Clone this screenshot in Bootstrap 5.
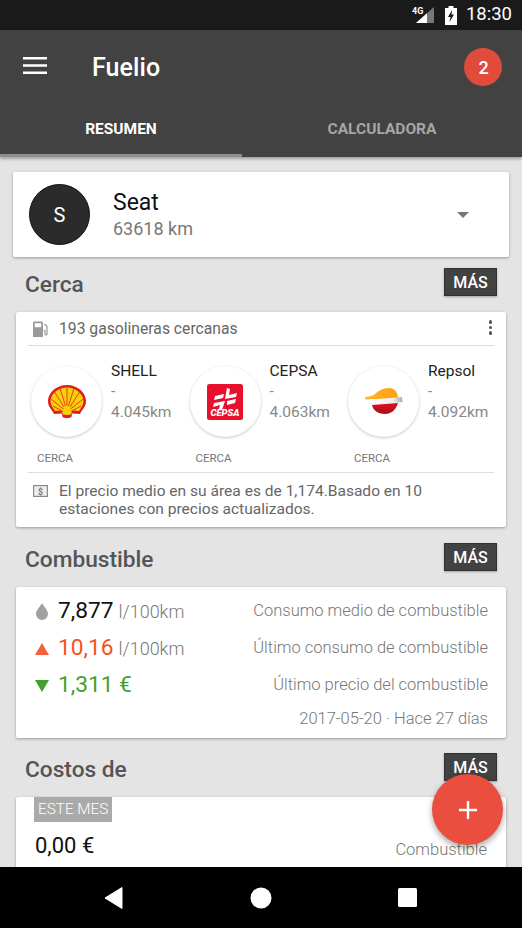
<!DOCTYPE html>
<html lang="es">
<head>
  <meta charset="UTF-8" />
  <title>Fuelio</title>
  <meta name="viewport" content="width=device-width, initial-scale=1.0" />
  <link href="https://cdn.jsdelivr.net/npm/bootstrap@5.3.2/dist/css/bootstrap.min.css" rel="stylesheet">
  <style>
    html, body { height: 928px; overflow: hidden; }
    body { font-family: Roboto, "Liberation Sans", sans-serif; background: #e4e4e4; width: 522px; }
    .screen { height: 928px; position: relative; }

    .status-bar { height: 30px; background: #1a1a1a; color: #fff; font-size: 18.5px; padding-right: 10px; }
    .app-bar { height: 127px; background: #424242; color: #fff; box-shadow: 0 2px 3px rgba(0,0,0,.3); z-index: 2; position: relative; }
    .app-top { height: 74px; padding: 0 20px 0 23px; }
    .menu-ico { margin-bottom: 3px; }
    .app-title { font-size: 25px; font-weight: 500; margin-left: 45px; padding-top: 1px; letter-spacing: .1px; }
    .alert-dot { width: 38px; height: 38px; background: #e04b3a; font-size: 18px; font-weight: 500; padding-left: 1px; }
    .tab-item { height: 53px; font-size: 15.5px; font-weight: 700; color: #a6a6a6; padding-top: 2px; padding-bottom: 3px; }
    .tab-one { width: 242px; }
    .tab-two { width: 280px; }
    .tab-item.on { color: #fff; border-bottom: 3px solid #8e8e8e; padding-bottom: 0; }

    .content { height: 710px; overflow: hidden; padding-top: 15px; }
    .sheet { background: #fff; border-radius: 2px; box-shadow: 0 1px 3px rgba(0,0,0,.32); }
    .car-sheet { margin: 0 13px; height: 85px; padding: 0 40px 0 16px; }
    .car-avatar { width: 61px; height: 61px; background: #2b2b2b; border: 1px solid #111; color: #fff; font-size: 20px; margin-right: 23px; }
    .car-name { font-size: 23px; line-height: 28px; color: #111; }
    .car-km { font-size: 18px; line-height: 24px; color: #777; }
    .caret-down { width: 0; height: 0; border-left: 6.5px solid transparent; border-right: 6.5px solid transparent; border-top: 6.5px solid #777; }

    .sect-head { height: 28px; margin-bottom: 16px; padding: 0 25px; }
    .gap-a { margin-top: 11px; }
    .gap-b { margin-top: 16px; }
    .gap-c { margin-top: 15px; }
    .sect-name { font-size: 22.7px; font-weight: 500; color: #555; padding-top: 6px; }
    .more-btn { width: 53px; height: 28px; background: #424242; color: #fff; font-size: 16px; font-weight: 500; padding: 1px 0 0; border-radius: 0; border: 1px solid #333; box-shadow: 0 1px 2px rgba(0,0,0,.3); }
    .sect-wrap { margin: 0 16px; }

    .near-sheet { height: 215px; padding: 0 12px; }
    .near-top { height: 34px; font-size: 15.7px; color: #666; border-bottom: 1px solid #ddd; padding-right: 2px; }
    .near-top svg { margin: 0 11px 0 5px; }
    .dots-v i { display: block; width: 3.5px; height: 3.5px; border-radius: 50%; background: #555; margin-bottom: 2px; }
    .stations { height: 127px; border-bottom: 1px solid #ddd; padding-left: 3px; }
    .station { width: 158.5px; flex-shrink: 0; padding-top: 20px; }
    .logo-disc { width: 71px; height: 71px; background: #fff; box-shadow: 0 1px 3px rgba(0,0,0,.22); margin-right: 9px; flex-shrink: 0; }
    .st-text { padding-top: 1px; }
    .st-name { font-size: 15.5px; line-height: 20px; color: #222; margin-top: -6px; }
    .st-line { font-size: 15.5px; line-height: 21px; color: #888; }
    .near-tag { font-size: 11.5px; color: #777; padding-left: 6px; margin-top: 13px; }
    .near-foot { font-size: 15.55px; line-height: 18px; color: #666; padding-top: 9px; }
    .near-foot svg { margin: 3px 11px 0 5px; flex-shrink: 0; }

    .fuel-sheet { height: 151px; padding: 6px 18px 0 19px; }
    .fuel-row { height: 37px; }
    .fuel-ico { width: 14px; margin-right: 9px; }
    .fuel-val { font-size: 22.7px; margin-right: 5px; color: #111; }
    .fuel-unit { font-size: 18px; font-weight: 300; color: #777; }
    .fuel-label { font-size: 16.5px; font-weight: 300; color: #777; margin-left: auto; }
    .val-up { color: #f4511e; }
    .val-down { color: #43a02c; }
    .fuel-date { font-size: 16.5px; font-weight: 300; color: #777; text-align: right; margin-top: 3px; }

    .cost-sheet { height: 120px; padding: 0 19px; }
    .month-tag { display: inline-block; background: #aaa; color: #fff; font-size: 15.3px; font-weight: 300; height: 25px; line-height: 25px; padding: 0 4px; margin-left: -1px; }
    .cost-row { margin-top: 7px; }
    .cost-val { font-size: 22px; color: #111; }
    .cost-label { font-size: 16.5px; font-weight: 300; color: #777; margin-bottom: -1px; }

    .fab-add { position: absolute; left: 432px; top: 774px; width: 71px; height: 71px; background: #e94e3f; box-shadow: 0 3px 6px rgba(0,0,0,.35); z-index: 3; }
    .nav-bar { position: absolute; left: 0; right: 0; bottom: 0; height: 61px; background: #000; z-index: 4; }
  </style>
</head>
<body>
<div class="screen d-flex flex-column">

  <div class="status-bar d-flex align-items-center justify-content-end">
    <svg width="22" height="20" viewBox="0 0 22 20" style="margin-right:11px">
      <path d="M4 18 L22 2 V18 Z" fill="#777"/>
      <path d="M4 18 L15 8.200 V18 Z" fill="#fff"/>
      <text x="0" y="9" font-size="9" font-weight="700" fill="#fff" font-family="Roboto, sans-serif">4G</text>
    </svg>
    <svg width="12" height="19" viewBox="0 0 12 19" style="margin-right:9px">
      <path d="M3.500 0h5v2H12v17H0V2h3.500z" fill="#fff"/>
      <path d="M7 4 L3 11 H5.500 L4.500 16 L9 8.500 H6.500 Z" fill="#1a1a1a"/>
    </svg>
    <span>18:30</span>
  </div>

  <div class="app-bar">
    <div class="app-top d-flex align-items-center">
      <svg class="menu-ico" width="24" height="17" viewBox="0 0 24 17"><path d="M0 1.200h24M0 8.500h24M0 15.800h24" stroke="#fff" stroke-width="2.400"/></svg>
      <span class="app-title">Fuelio</span>
      <span class="alert-dot rounded-circle d-flex align-items-center justify-content-center ms-auto">2</span>
    </div>
    <div class="d-flex">
      <div class="tab-item tab-one on d-flex align-items-center justify-content-center">RESUMEN</div>
      <div class="tab-item tab-two d-flex align-items-center justify-content-center">CALCULADORA</div>
    </div>
  </div>

  <div class="content">
    <div class="sheet car-sheet d-flex align-items-center">
      <div class="car-avatar rounded-circle d-flex align-items-center justify-content-center">S</div>
      <div>
        <div class="car-name">Seat</div>
        <div class="car-km">63618 km</div>
      </div>
      <div class="caret-down ms-auto"></div>
    </div>

    <div class="sect-head gap-a d-flex align-items-center justify-content-between">
      <span class="sect-name">Cerca</span>
      <button class="btn more-btn" type="button">MÁS</button>
    </div>
    <div class="sect-wrap">
      <div class="sheet near-sheet">
        <div class="near-top d-flex align-items-center">
          <svg width="15" height="16" viewBox="0 0 15 16">
            <path d="M0 1.500A1 1 0 0 1 1 .5h8a1 1 0 0 1 1 1V16H0z" fill="#9a9a9a"/>
            <rect x="1.800" y="2.200" width="6.400" height="4" fill="#fff"/>
            <path d="M11.500 3l2.500 2.500V13a1 1 0 0 1-2 0V9.500h-1.500" fill="none" stroke="#9a9a9a" stroke-width="1.200"/>
          </svg>
          <span>193 gasolineras cercanas</span>
          <span class="dots-v ms-auto"><i></i><i></i><i></i></span>
        </div>

        <div class="stations d-flex">
          <div class="station">
            <div class="d-flex">
              <div class="logo-disc rounded-circle d-flex align-items-center justify-content-center">
                <svg width="38" height="34" viewBox="0 0 38 34">
                  <path d="M19 0C8 0 0 8 0 16c0 5 3 8 5 11l1 2 8-.5.500 3.500c2 1.500 7 1.500 9 0l.5-3.500 8 .5 1-2c2-3 5-6 5-11C38 8 30 0 19 0z" fill="#dd1d21"/>
                  <path d="M19 2.500C10 2.500 2.500 9 2.500 16c0 4 2.500 7 4.500 10l6.500-.5 1.500 4c2 .5 6 .5 8 0l1.500-4 6.500.5c2-3 4.500-6 4.500-10C35.500 9 28 2.500 19 2.500z" fill="#fbce07"/>
                  <path d="M19 21V2.500M17.500 21L12 3.500M20.500 21L26 3.500M16 22L6.500 7M22 22L31.500 7M15.500 24L2.800 14M22.500 24L35.200 14M15 26.500L5 21M23 26.500L33 21" stroke="#e03020" stroke-width=".9" fill="none"/>
                </svg>
              </div>
              <div class="st-text">
                <div class="st-name">SHELL</div>
                <div class="st-line">-</div>
                <div class="st-line">4.045km</div>
              </div>
            </div>
            <div class="near-tag">CERCA</div>
          </div>
          <div class="station">
            <div class="d-flex">
              <div class="logo-disc rounded-circle d-flex align-items-center justify-content-center">
                <svg width="36" height="36" viewBox="0 0 36 36">
                  <rect width="36" height="36" rx="2.500" fill="#e8112d"/>
                  <path d="M20 4l3 1-1 6 8-2-1 4-11 2zM8 12l9-2-1 4-9 2zM7 19l11-2-3 9-3-1 1-4-7 2zM20 17l9-2-1 4-8 2z" fill="#fff"/>
                  <text x="18" y="32" text-anchor="middle" textLength="29" lengthAdjust="spacingAndGlyphs" font-size="8.500" font-weight="900" font-style="italic" fill="#fff" font-family="Roboto, sans-serif">CEPSA</text>
                </svg>
              </div>
              <div class="st-text">
                <div class="st-name">CEPSA</div>
                <div class="st-line">-</div>
                <div class="st-line">4.063km</div>
              </div>
            </div>
            <div class="near-tag">CERCA</div>
          </div>
          <div class="station">
            <div class="d-flex">
              <div class="logo-disc rounded-circle d-flex align-items-center justify-content-center">
                <svg width="38" height="27" viewBox="0 0 38 27">
                  <defs>
                    <linearGradient id="capFill" x1="0" y1="0" x2="1" y2="0"><stop offset="0" stop-color="#ffb52e"/><stop offset="1" stop-color="#ff9f0a"/></linearGradient>
                    <linearGradient id="bandFill" x1="0" y1="0" x2="1" y2="0"><stop offset="0" stop-color="#fff"/><stop offset=".7" stop-color="#eee"/><stop offset="1" stop-color="#aaa"/></linearGradient>
                    <linearGradient id="baseFill" x1="0" y1="0" x2="0" y2="1"><stop offset="0" stop-color="#e0101e"/><stop offset="1" stop-color="#a80f1c"/></linearGradient>
                  </defs>
                  <path d="M0 9c3 0 8-1 10-3 3-3 8-6 14-6 6 0 9 5 9 11H6c-4 1-6 1-6-2z" fill="url(#capFill)"/>
                  <path d="M6 11.500l31-2.500.5 5-31.500 3z" fill="url(#bandFill)"/>
                  <path d="M7 17l26-2c-2 7-7 11-13 11-6 0-12-3-13-9z" fill="url(#baseFill)"/>
                </svg>
              </div>
              <div class="st-text">
                <div class="st-name">Repsol</div>
                <div class="st-line">-</div>
                <div class="st-line">4.092km</div>
              </div>
            </div>
            <div class="near-tag">CERCA</div>
          </div>
        </div>

        <div class="near-foot d-flex">
          <svg width="15" height="12" viewBox="0 0 15 12">
            <rect x=".6" y=".6" width="13.800" height="10.800" fill="#eee" stroke="#888" stroke-width="1.200"/>
            <text x="7.500" y="9.500" text-anchor="middle" font-size="8.500" font-weight="700" fill="#777" font-family="Roboto, sans-serif">$</text>
          </svg>
          <span>El precio medio en su área es de 1,174.Basado en 10 estaciones con precios actualizados.</span>
        </div>
      </div>
    </div>

    <div class="sect-head gap-b d-flex align-items-center justify-content-between">
      <span class="sect-name">Combustible</span>
      <button class="btn more-btn" type="button">MÁS</button>
    </div>
    <div class="sect-wrap">
      <div class="sheet fuel-sheet">
        <div class="fuel-row d-flex align-items-center">
          <svg class="fuel-ico" width="14" height="18" viewBox="0 0 14 18"><path d="M7 0c2 4 6 7 6 11a6 6 0 0 1-12 0C1 7 5 4 7 0z" fill="#a0a0a0"/></svg>
          <span class="fuel-val">7,877</span><span class="fuel-unit">l/100km</span>
          <span class="fuel-label">Consumo medio de combustible</span>
        </div>
        <div class="fuel-row d-flex align-items-center">
          <svg class="fuel-ico" width="14" height="12" viewBox="0 0 14 12"><path d="M7 0l7 12H0z" fill="#f4603c"/></svg>
          <span class="fuel-val val-up">10,16</span><span class="fuel-unit">l/100km</span>
          <span class="fuel-label">Último consumo de combustible</span>
        </div>
        <div class="fuel-row d-flex align-items-center">
          <svg class="fuel-ico" width="14" height="12" viewBox="0 0 14 12"><path d="M7 12L0 0h14z" fill="#43a02c"/></svg>
          <span class="fuel-val val-down">1,311 €</span>
          <span class="fuel-label">Último precio del combustible</span>
        </div>
        <div class="fuel-date">2017-05-20 · Hace 27 días</div>
      </div>
    </div>

    <div class="sect-head gap-c d-flex align-items-center justify-content-between">
      <span class="sect-name">Costos de</span>
      <button class="btn more-btn" type="button">MÁS</button>
    </div>
    <div class="sect-wrap">
      <div class="sheet cost-sheet">
        <span class="month-tag">ESTE MES</span>
        <div class="cost-row d-flex align-items-end justify-content-between">
          <span class="cost-val">0,00 €</span>
          <span class="cost-label">Combustible</span>
        </div>
      </div>
    </div>
  </div>

  <div class="fab-add rounded-circle d-flex align-items-center justify-content-center">
    <svg width="18" height="18" viewBox="0 0 18 18"><path d="M9 0v18M0 9h18" stroke="#fff" stroke-width="2.400"/></svg>
  </div>

  <div class="nav-bar d-flex align-items-center">
    <svg width="522" height="61" viewBox="0 0 522 61">
      <path d="M105 31 L122 20.500 V41.500 Z" fill="#fff" stroke="#fff" stroke-width="1" stroke-linejoin="round"/>
      <circle cx="261" cy="31" r="10.500" fill="#fff"/>
      <rect x="398" y="21" width="19" height="19" rx="1.500" fill="#fff"/>
    </svg>
  </div>
</div>
<script src="https://cdn.jsdelivr.net/npm/bootstrap@5.3.2/dist/js/bootstrap.bundle.min.js"></script>
</body>
</html>
